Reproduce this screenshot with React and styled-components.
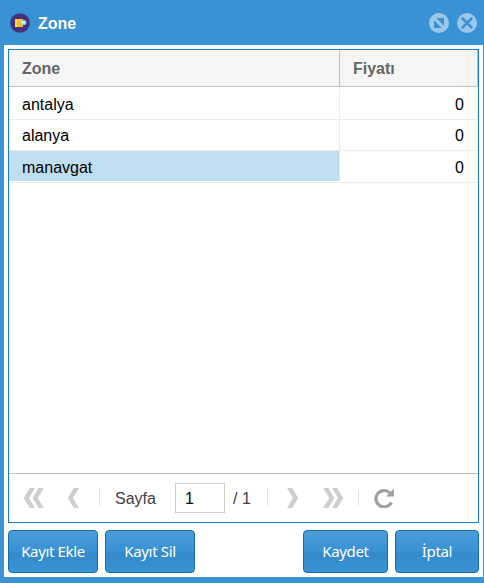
import React from "react";
import styled, { createGlobalStyle } from "styled-components";

const Global = createGlobalStyle`
  * { box-sizing: border-box; }
  body { margin: 0; background: #3892d4; font: 16px/20px "Liberation Sans", Arial, sans-serif; overflow: hidden; }
`;
const Window = styled.div`
  width: 484px; height: 583px; display: flex; flex-direction: column;
  background: #3892d4; padding: 0 1px 6px 4px; border-top-left-radius: 2px;
`;
const TitleBar = styled.header`
  height: 45px; flex: none; display: flex; align-items: center; gap: 8px;
  padding: 1px 6px 0 6px; color: #fff; font-weight: bold;
`;
const Title = styled.h1`
  margin: 0; padding-top: 2px; flex: 1; font-size: 16px; line-height: 20px;
`;
const Tool = styled.button`
  display: block; width: 20px; height: 20px; padding: 0; border: 0; background: none;
  svg { display: block; }
`;
const Body = styled.main`
  flex: 1; min-height: 0; display: flex; flex-direction: column;
  background: #fff; padding: 4px 4px 4px;
  width: 479px;
`;
const Grid = styled.section`
  height: 474px; width: 471px; flex: none; border: 1px solid #157fcc;
  display: flex; flex-direction: column;
`;
const HeaderRow = styled.div`
  height: 37px; flex: none; display: flex; background: #f5f5f5;
  border-bottom: 1px solid #c0c0c0; color: #666; font-weight: bold;
`;
const HeaderCell = styled.div`
  width: ${(p) => p.$width}px; padding: 9px 12px 0 13px;
  border-right: 1px solid #c0c0c0; line-height: 19px;
`;
const Rows = styled.div`
  flex: 1;
`;
const Row = styled.div`
  height: ${(p) => p.$height}px; display: flex; align-items: stretch;
  border-bottom: 1px solid #ededed; padding: ${(p) => p.$inset};
`;
const Cell = styled.div`
  width: ${(p) => (p.$number ? 138 : 331)}px; padding: ${(p) => p.$top}px 13px 0;
  text-align: ${(p) => (p.$number ? "right" : "left")}; line-height: 20px;
  background: ${(p) => (p.$selected ? "#c1ddf1" : "#fff")};
  border-right: 1px solid ${(p) => (p.$selected ? "#d9e6ef" : "#ededed")};
`;
const Pager = styled.footer`
  height: 49px; flex: none; display: flex; align-items: center;
  border-top: 1px solid #c0c0c0; color: #404040; padding-left: 14px;
  svg { display: block; flex: none; }
`;
const PageIcon = styled.span`
  width: ${(p) => p.$width}px; margin-right: ${(p) => p.$after}px; flex: none;
`;
const Separator = styled.span`
  width: 1px; height: 17px; background: #e1e1e1; margin: -1px ${(p) => p.$after}px 0 0;
`;
const PageLabel = styled.label`
  width: 60px; padding-top: 2px;
`;
const PageInput = styled.input`
  width: 50px; height: 30px; border: 1px solid #cfcfcf; padding: 2px 9px 0;
  font: 16px/20px "Liberation Sans", Arial, sans-serif; color: #000; outline: 0; border-radius: 0;
`;
const Total = styled.span`
  width: 42px; padding: 2px 0 0 8px; white-space: nowrap;
`;
const Buttons = styled.div`
  display: flex; margin-top: 7px; gap: 7px;
`;
const Button = styled.button`
  width: ${(p) => p.$width}px; height: 43px; padding: 0 0 2px; border: 1px solid #126daf; border-radius: 4px;
  background: linear-gradient(#4b9cd7, #3892d4 50%, #358ac8 51%, #3892d4);
  color: #fff; font: 15px/20px "Noto Sans", "Open Sans", sans-serif;
  letter-spacing: -0.35px; white-space: nowrap;
`;
const Spring = styled.span`
  flex: 1;
`;

const records = [
  { name: "antalya", price: 0, height: 33, top: 6, inset: "2px 0 0" },
  { name: "alanya", price: 0, height: 31, top: 6, inset: "0" },
  { name: "manavgat", price: 0, height: 32, top: 7, inset: "0 0 1px", selected: true },
];

const ZoneIcon = () => (
  <svg width="20" height="20" viewBox="0 0 20 20">
    <circle cx="10" cy="10" r="9.8" fill="#463080" />
    <path d="M5 6h8v8H5z" fill="#f5c024" />
    <path d="M5 6h2v8H5z" fill="#ffda20" />
    <rect x="10.5" y="7" width="5.8" height="5" rx="1.8" fill="#8fcbe6" />
    <path d="M11.5 8.5h3.5v2h-3.5z" fill="#d4f4ff" />
  </svg>
);
const Chevron = ({ double, right }) => (
  <svg width={double ? 21 : 13} height="20" viewBox={double ? "0 0 21 20" : "0 0 13 20"}>
    <g fill="#cecece" transform={right ? `translate(${double ? 21 : 13} 0) scale(-1 1)` : undefined}>
      <path d="M6.8 0H12L6 10l6 10H6.8L.8 10z" />
      {double && <path d="M15.6 0h5.2l-6 10 6 10h-5.2l-6-10z" />}
    </g>
  </svg>
);

export default function App() {
  return (
    <>
      <Global />
      <Window>
        <TitleBar>
          <ZoneIcon />
          <Title>Zone</Title>
          <Tool aria-label="Restore">
            <svg width="20" height="20" viewBox="0 0 20 20">
              <circle cx="10" cy="10" r="10" fill="#9bc8e9" />
              <path d="M7.2 5H15v7.8zM5 7.2V15h7.8z" fill="#3892d4" />
            </svg>
          </Tool>
          <Tool aria-label="Close">
            <svg width="20" height="20" viewBox="0 0 20 20">
              <circle cx="10" cy="10" r="10" fill="#9bc8e9" />
              <path d="M5.5 5.5l9 9m0-9l-9 9" stroke="#3892d4" strokeWidth="2.5" strokeLinecap="round" />
            </svg>
          </Tool>
        </TitleBar>
        <Body>
          <Grid>
            <HeaderRow>
              <HeaderCell $width={331}>Zone</HeaderCell>
              <HeaderCell $width={138}>Fiyatı</HeaderCell>
            </HeaderRow>
            <Rows>
              {records.map((r) => (
                <Row key={r.name} $height={r.height} $inset={r.inset}>
                  <Cell $top={r.top} $selected={r.selected}>{r.name}</Cell>
                  <Cell $top={r.top} $number>{r.price}</Cell>
                </Row>
              ))}
            </Rows>
            <Pager>
              <PageIcon $width={21} $after={23}><Chevron double /></PageIcon>
              <PageIcon $width={13} $after={19}><Chevron /></PageIcon>
              <Separator $after={15} />
              <PageLabel>Sayfa</PageLabel>
              <PageInput defaultValue="1" />
              <Total>/ 1</Total>
              <Separator $after={18} />
              <PageIcon $width={13} $after={24}><Chevron right /></PageIcon>
              <PageIcon $width={21} $after={14}><Chevron double right /></PageIcon>
              <Separator $after={15} />
              <svg width="20" height="20" viewBox="0 0 20 20">
                <path d="M15.8 4.8A8.2 8.2 0 1 0 17.4 14.5" fill="none" stroke="#a0a0a0" strokeWidth="3.2" />
                <path d="M20 .5v8h-8z" fill="#a0a0a0" />
              </svg>
            </Pager>
          </Grid>
          <Buttons>
            <Button $width={90}>Kayıt Ekle</Button>
            <Button $width={90}>Kayıt Sil</Button>
            <Spring />
            <Button $width={85}>Kaydet</Button>
            <Button $width={84}>İptal</Button>
          </Buttons>
        </Body>
      </Window>
    </>
  );
}
